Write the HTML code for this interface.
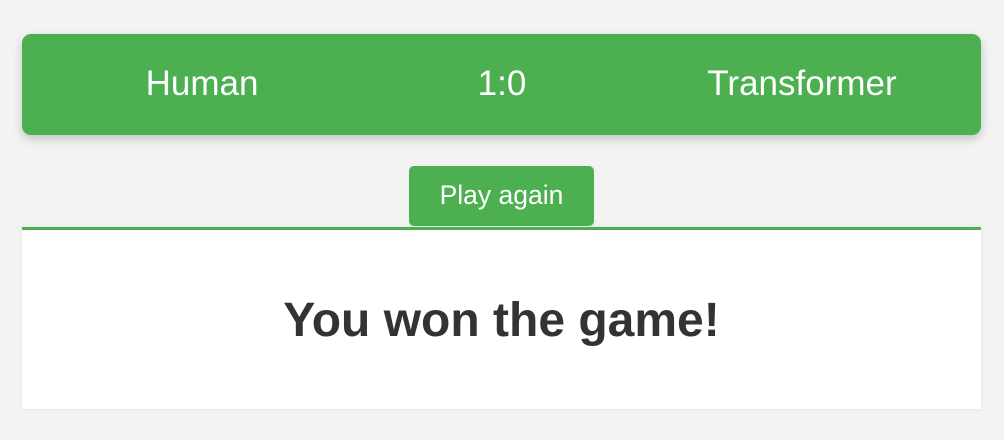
<!DOCTYPE html>
<html><head><style>
body{margin:0;background:#f3f3f3;width:1004px;height:440px;position:relative;font-family:"Liberation Sans",Arial,sans-serif;overflow:hidden}
.hdr{position:absolute;left:22px;top:34px;width:959px;height:101px;background:#4caf50;border-radius:9px;box-shadow:0 4px 10px rgba(0,0,0,.2)}
.hdr span{position:absolute;top:30px;color:#fff;font-size:35px;line-height:40px;transform:translateX(-50%);white-space:nowrap}
.btn{position:absolute;left:409px;top:166px;width:185px;height:60px;background:#4caf50;border-radius:5px;color:#fff;font-size:26.5px;line-height:58px;text-align:center}
.panel{position:absolute;left:22px;top:227px;width:959px;height:182px;background:#fff;border-top:3px solid #4caf50;box-sizing:border-box;box-shadow:0 0 6px rgba(0,0,0,.06)}
.panel h1{margin:0;position:absolute;top:64px;width:100%;text-align:center;font-size:48px;color:#333;font-weight:bold;line-height:54px}
</style></head><body>
<div class="hdr"><span style="left:180px">Human</span><span style="left:480px">1:0</span><span style="left:780px">Transformer</span></div>
<div class="panel"><h1>You won the game!</h1></div>
<div class="btn">Play again</div>
</body></html>
